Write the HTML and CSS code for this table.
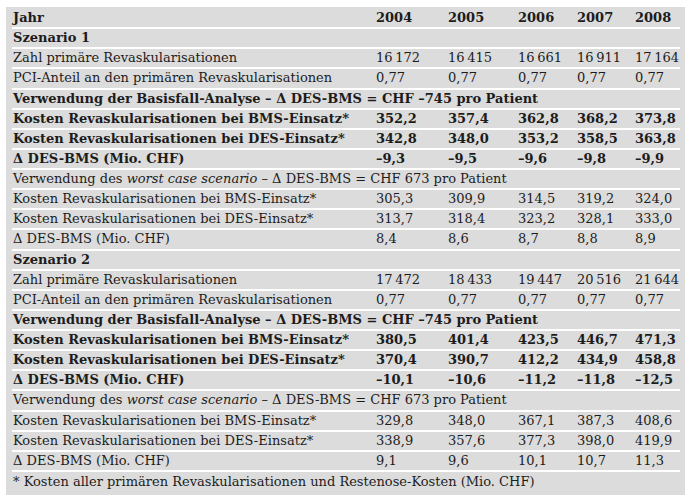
FILE: index.html
```html
<!DOCTYPE html>
<html lang="de">
<head>
<meta charset="utf-8">
<title>Revaskularisationen</title>
<link rel="stylesheet" href="styles.css">
</head>
<body>
<div class="panel">
  <div class="row head b"><span>Jahr</span><span>2004</span><span>2005</span><span>2006</span><span>2007</span><span>2008</span></div>
  <div class="row b"><span class="span">Szenario 1</span></div>
  <div class="row"><span>Zahl primäre Revaskularisationen</span><span>16&#8201;172</span><span>16&#8201;415</span><span>16&#8201;661</span><span>16&#8201;911</span><span>17&#8201;164</span></div>
  <div class="row"><span>PCI-Anteil an den primären Revaskularisationen</span><span>0,77</span><span>0,77</span><span>0,77</span><span>0,77</span><span>0,77</span></div>
  <div class="row b"><span class="span">Verwendung der Basisfall-Analyse – Δ DES-BMS = CHF –745 pro Patient</span></div>
  <div class="row b"><span>Kosten Revaskularisationen bei BMS-Einsatz*</span><span>352,2</span><span>357,4</span><span>362,8</span><span>368,2</span><span>373,8</span></div>
  <div class="row b"><span>Kosten Revaskularisationen bei DES-Einsatz*</span><span>342,8</span><span>348,0</span><span>353,2</span><span>358,5</span><span>363,8</span></div>
  <div class="row b"><span>Δ DES-BMS (Mio. CHF)</span><span>–9,3</span><span>–9,5</span><span>–9,6</span><span>–9,8</span><span>–9,9</span></div>
  <div class="row"><span class="span">Verwendung des <i>worst case scenario</i> – Δ DES-BMS = CHF 673 pro Patient</span></div>
  <div class="row"><span>Kosten Revaskularisationen bei BMS-Einsatz*</span><span>305,3</span><span>309,9</span><span>314,5</span><span>319,2</span><span>324,0</span></div>
  <div class="row"><span>Kosten Revaskularisationen bei DES-Einsatz*</span><span>313,7</span><span>318,4</span><span>323,2</span><span>328,1</span><span>333,0</span></div>
  <div class="row"><span>Δ DES-BMS (Mio. CHF)</span><span>8,4</span><span>8,6</span><span>8,7</span><span>8,8</span><span>8,9</span></div>
  <div class="row b"><span class="span">Szenario 2</span></div>
  <div class="row"><span>Zahl primäre Revaskularisationen</span><span>17&#8201;472</span><span>18&#8201;433</span><span>19&#8201;447</span><span>20&#8201;516</span><span>21&#8201;644</span></div>
  <div class="row"><span>PCI-Anteil an den primären Revaskularisationen</span><span>0,77</span><span>0,77</span><span>0,77</span><span>0,77</span><span>0,77</span></div>
  <div class="row b"><span class="span">Verwendung der Basisfall-Analyse – Δ DES-BMS = CHF –745 pro Patient</span></div>
  <div class="row b"><span>Kosten Revaskularisationen bei BMS-Einsatz*</span><span>380,5</span><span>401,4</span><span>423,5</span><span>446,7</span><span>471,3</span></div>
  <div class="row b"><span>Kosten Revaskularisationen bei DES-Einsatz*</span><span>370,4</span><span>390,7</span><span>412,2</span><span>434,9</span><span>458,8</span></div>
  <div class="row b"><span>Δ DES-BMS (Mio. CHF)</span><span>–10,1</span><span>–10,6</span><span>–11,2</span><span>–11,8</span><span>–12,5</span></div>
  <div class="row"><span class="span">Verwendung des <i>worst case scenario</i> – Δ DES-BMS = CHF 673 pro Patient</span></div>
  <div class="row"><span>Kosten Revaskularisationen bei BMS-Einsatz*</span><span>329,8</span><span>348,0</span><span>367,1</span><span>387,3</span><span>408,6</span></div>
  <div class="row"><span>Kosten Revaskularisationen bei DES-Einsatz*</span><span>338,9</span><span>357,6</span><span>377,3</span><span>398,0</span><span>419,9</span></div>
  <div class="row"><span>Δ DES-BMS (Mio. CHF)</span><span>9,1</span><span>9,6</span><span>10,1</span><span>10,7</span><span>11,3</span></div>
  <div class="row foot"><span class="span">* Kosten aller primären Revaskularisationen und Restenose-Kosten (Mio. CHF)</span></div>
</div>
</body>
</html>
```

FILE: styles.css
```css
html, body {
  margin: 0;
  padding: 0;
  background: #ffffff;
}

body {
  font-family: "DejaVu Serif", "Liberation Serif", serif;
  font-size: 13px;
  color: #1c1c1c;
}

.panel {
  margin: 7px 0 0 6px;
  width: 679px;
  height: 488px;
  box-sizing: border-box;
  background: #dcdcdc;
  padding: 2px 5px 0 6px;
}

.row {
  display: grid;
  grid-template-columns: 363px 72px 70px 59px 58px 1fr;
  align-items: center;
  height: 20.14px;
  box-sizing: border-box;
  border-bottom: 2px solid #ffffff;
  padding-left: 1px;
  line-height: 18px;
  white-space: nowrap;
}

.row.foot {
  border-bottom: none;
}

.b {
  font-weight: bold;
}

.span {
  grid-column: 1 / -1;
}

i {
  font-style: italic;
}
```
